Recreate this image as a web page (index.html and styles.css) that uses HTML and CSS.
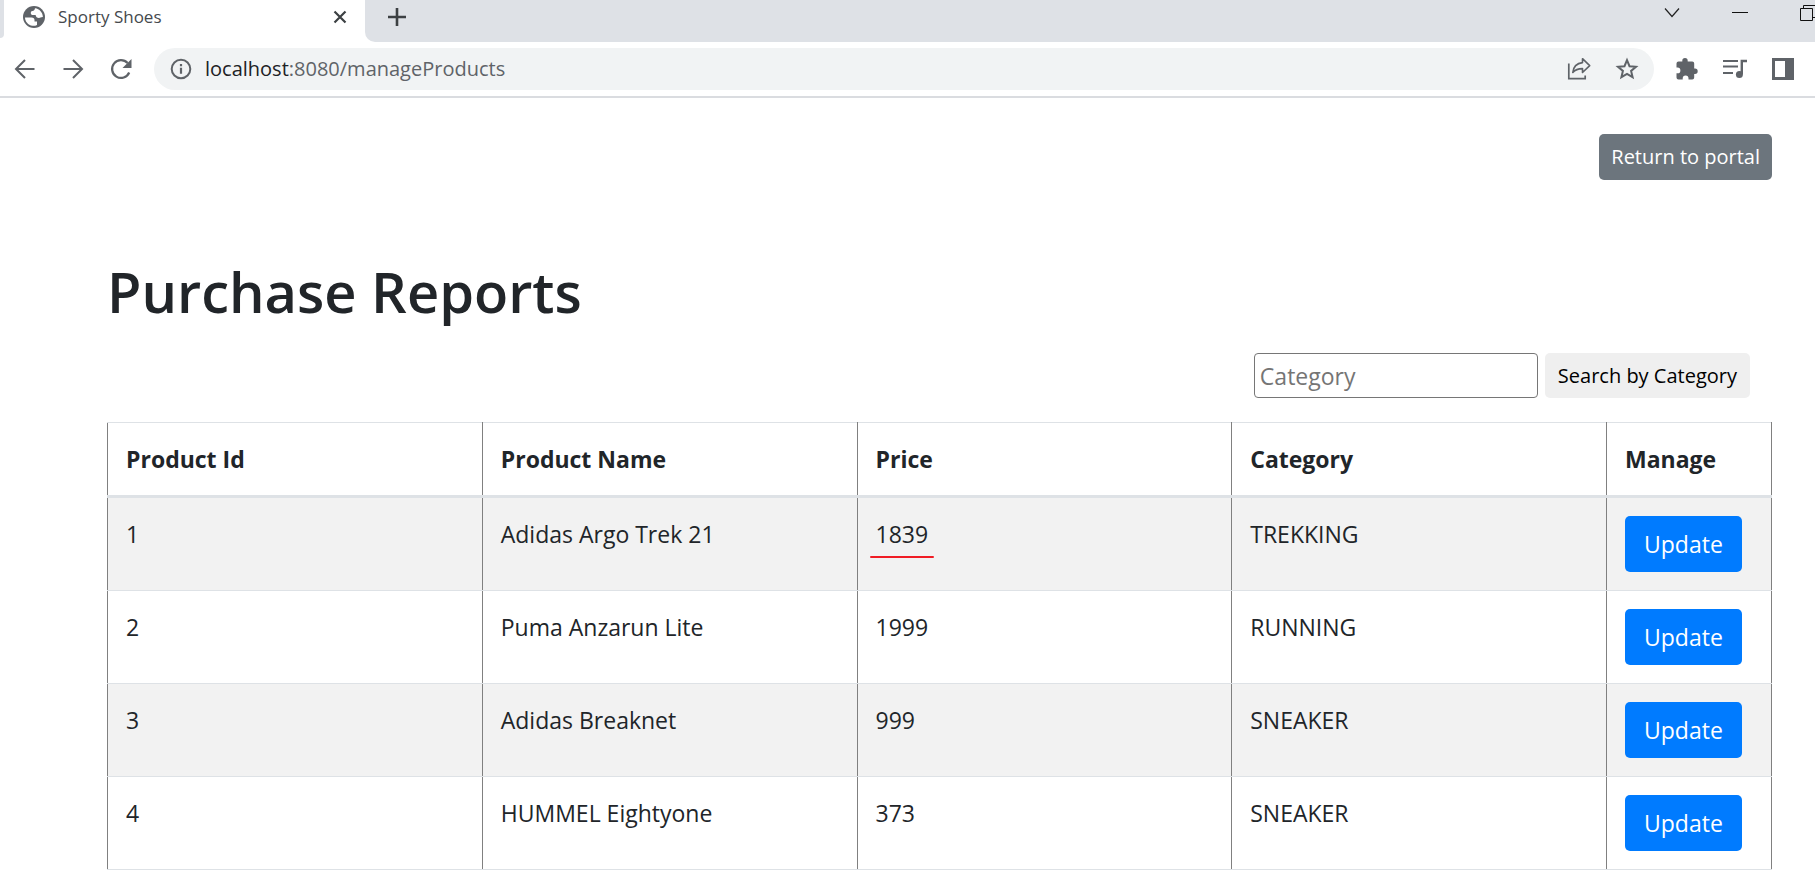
FILE: index.html
```html
<!DOCTYPE html>
<html lang="en">
<head>
<meta charset="utf-8">
<title>Sporty Shoes</title>
<link rel="stylesheet" href="styles.css">
</head>
<body>
<header class="browser">
  <div class="tabstrip">
    <div class="strip-edge"></div>
    <div class="tab">
      <svg class="favicon" viewBox="0 0 24 24" aria-hidden="true"><circle cx="12" cy="12" r="11" fill="#5f6368"/><path d="M3 12.500h6.500c2 0 3 1 3 2.500v1.500h2.500v3.500c-1.500.800-3 1-4.500.800C6 20 3 16.500 3 12.500zM13 3.200c-.4 1.800-1 2.600-2.600 2.800-1 .1-1.600.8-1.600 2 0 1.400.8 2 2.200 2h2.600c.3 2 1.400 3 3.400 3 1.200 0 1.600-1 3.900-1C20.800 7.500 17.500 3.800 13 3.200z" fill="#fff"/></svg>
      <span class="tab-title">Sporty Shoes</span>
      <button class="icon-btn" aria-label="Close tab"><svg width="14" height="14" viewBox="0 0 14 14"><path d="M1.500 1.500l11 11M12.500 1.500l-11 11" stroke="#3c4043" stroke-width="2.200"/></svg></button>
    </div>
    <div class="strip-rest">
      <button class="icon-btn" aria-label="New tab"><svg width="20" height="20" viewBox="0 0 20 20"><path d="M10 1v18M1 10h18" stroke="#3c4043" stroke-width="2.600"/></svg></button>
      <div class="window-controls">
        <button class="window-btn" aria-label="Search tabs"><svg width="18" height="12" viewBox="0 0 18 12"><path d="M2 1.500l7 8 7-8" fill="none" stroke="#222" stroke-width="1.200"/></svg></button>
        <button class="window-btn" aria-label="Minimize"><svg width="16" height="12" viewBox="0 0 16 12"><path d="M0 5.500h16" stroke="#111"/></svg></button>
        <button class="window-btn" aria-label="Restore"><svg width="16" height="16" viewBox="0 0 16 16"><path d="M.5 3.500h12v12H.5zM3.500 3.500v-3h12v12h-3" fill="none" stroke="#111"/></svg></button>
      </div>
    </div>
  </div>
  <div class="toolbar">
    <nav class="nav-icons">
      <button class="icon-btn" aria-label="Back"><svg width="24" height="24" viewBox="0 0 24 24"><path d="M21.500 12H3.500M12 3l-9 9 9 9" fill="none" stroke="#5f6368" stroke-width="2"/></svg></button>
      <button class="icon-btn" aria-label="Forward"><svg width="24" height="24" viewBox="0 0 24 24"><path d="M2.500 12h18M12 3l9 9-9 9" fill="none" stroke="#5f6368" stroke-width="2"/></svg></button>
      <button class="icon-btn" aria-label="Reload"><svg width="24" height="24" viewBox="0 0 24 24"><path d="M20.200 15.500A8.900 8.900 0 1 1 18.600 6" fill="none" stroke="#5f6368" stroke-width="2.200"/><path d="M22.500 2v9h-9z" fill="#5f6368"/></svg></button>
    </nav>
    <div class="omnibox">
      <svg width="24" height="24" viewBox="0 0 24 24" aria-hidden="true"><circle cx="12" cy="12" r="9.300" fill="none" stroke="#5f6368" stroke-width="2"/><path d="M12 10.700v6M12 7v2.300" stroke="#5f6368" stroke-width="2.200"/></svg>
      <span class="url"><span class="host">localhost</span>:8080/manageProducts</span>
      <button class="icon-btn" aria-label="Share"><svg width="24" height="24" viewBox="0 0 24 24"><path d="M1.800 6.500v15.200h16.400v-3.200" fill="none" stroke="#5f6368" stroke-width="1.700"/><path d="M15.500 1.700l7.200 6.900-7.200 6.900v-3.900c-4.500 0-7.300 1-9.700 3.900.5-5 3.500-9.200 9.700-9.900z" fill="none" stroke="#5f6368" stroke-width="1.600" stroke-linejoin="round"/></svg></button>
      <button class="icon-btn" aria-label="Bookmark"><svg width="24" height="24" viewBox="0 0 24 24"><path d="M12 3.200l2.500 6 6.500.5-4.900 4.200 1.500 6.300L12 16.900l-5.600 3.300 1.500-6.300L3 9.700l6.500-.5z" fill="none" stroke="#5f6368" stroke-width="2"/></svg></button>
    </div>
    <div class="nav-icons">
      <button class="icon-btn" aria-label="Extensions"><svg width="24" height="24" viewBox="0 0 24 24"><path d="M20 11.500h-.800V6.500a2 2 0 0 0-2-2h-4.500V3.700a2.700 2.700 0 0 0-5.400 0v.8H3.500a2 2 0 0 0-2 2v4h1a2.900 2.900 0 0 1 0 5.800h-1v4.200a2 2 0 0 0 2 2h4.200v-1a2.900 2.900 0 0 1 5.800 0v1h3.700a2 2 0 0 0 2-2v-3.600h.8a2.700 2.700 0 0 0 0-5.400z" fill="#5f6368"/></svg></button>
      <button class="icon-btn" aria-label="Media controls"><svg width="24" height="24" viewBox="0 0 24 24"><path d="M0 4h15M0 9.500h15M0 16h10" stroke="#5f6368" stroke-width="2.100"/><path d="M18.800 17V4H24" fill="none" stroke="#5f6368" stroke-width="2.400"/><circle cx="16.400" cy="17.400" r="3.500" fill="#5f6368"/></svg></button>
      <button class="icon-btn" aria-label="Side panel"><svg width="24" height="24" viewBox="0 0 24 24"><path d="M1 1h22v22H1zM4 4v16h10V4z" fill="#5f6368" fill-rule="evenodd"/></svg></button>
    </div>
  </div>
</header>

<main class="page">
  <div class="portal-row"><a class="btn btn-secondary" href="#">Return to portal</a></div>
  <h1 class="title">Purchase Reports</h1>
  <form class="search">
    <input class="search-input" type="text" placeholder="Category" aria-label="Category">
    <button class="btn btn-plain" type="button">Search by Category</button>
  </form>
  <table class="products">
    <thead>
      <tr><th>Product Id</th><th>Product Name</th><th>Price</th><th>Category</th><th class="manage">Manage</th></tr>
    </thead>
    <tbody>
      <tr><td>1</td><td>Adidas Argo Trek 21</td><td><span class="marked">1839</span></td><td>TREKKING</td><td><button class="btn btn-primary">Update</button></td></tr>
      <tr><td>2</td><td>Puma Anzarun Lite</td><td>1999</td><td>RUNNING</td><td><button class="btn btn-primary">Update</button></td></tr>
      <tr><td>3</td><td>Adidas Breaknet</td><td>999</td><td>SNEAKER</td><td><button class="btn btn-primary">Update</button></td></tr>
      <tr><td>4</td><td>HUMMEL Eightyone</td><td>373</td><td>SNEAKER</td><td><button class="btn btn-primary">Update</button></td></tr>
    </tbody>
  </table>
</main>
</body>
</html>
```
FILE: styles.css
```css
* { box-sizing: border-box; }

body {
  margin: 0;
  overflow: hidden;
  background: #fff;
  color: #212529;
  font-family: "Open Sans", "Noto Sans", sans-serif;
  font-size: 23px;
  line-height: 36px;
}

button, input { font-family: inherit; }
svg { display: block; flex: none; }

.icon-btn, .window-btn {
  display: flex;
  align-items: center;
  justify-content: center;
  flex: none;
  padding: 0;
  border: 0;
  background: none;
}

/* Browser chrome */
.browser { border-bottom: 2px solid #dadce0; }

.tabstrip {
  display: flex;
  height: 42px;
  overflow: hidden;
}

.strip-edge {
  width: 4px;
  height: 38px;
  background: #dee1e6;
  border-bottom-right-radius: 4px;
}

.tab {
  display: flex;
  align-items: center;
  width: 361px;
  height: 33px;
  padding: 0 18px;
}

.favicon { width: 24px; height: 24px; }

.tab-title {
  flex: 1;
  margin-left: 12px;
  color: #45494d;
  font-size: 17px;
  line-height: 24px;
}

.strip-rest {
  display: flex;
  flex: 1;
  justify-content: space-between;
  align-items: flex-start;
  padding-left: 22px;
  background: #dee1e6;
  border-bottom-left-radius: 10px;
}

.strip-rest > .icon-btn { height: 33px; }
.window-controls { display: flex; margin-right: -27px; }
.window-btn { width: 68px; height: 25px; }

.toolbar {
  display: flex;
  align-items: center;
  gap: 21px;
  height: 54px;
  padding: 0 20px 0 13px;
}

.nav-icons { display: flex; gap: 24px; }

.omnibox {
  display: flex;
  flex: 1;
  align-items: center;
  gap: 24px;
  height: 42px;
  padding: 0 15px;
  border-radius: 21px;
  background: #f1f3f4;
}

.url {
  flex: 1;
  margin-left: -12px;
  color: #5f6368;
  font-size: 20px;
  line-height: 30px;
}

.host { color: #202124; }

/* Page */
.page { padding: 36px 43px 0 107px; }

.btn {
  border: 0;
  border-radius: 5px;
  font-size: 20px;
  line-height: 30px;
  text-align: center;
  text-decoration: none;
}

.portal-row { display: flex; justify-content: flex-end; }

.btn-secondary {
  padding: 8px 12px;
  background: #6c757d;
  color: #fff;
}

.title {
  margin: 75px 0 26px;
  font-size: 56px;
  font-weight: 600;
  line-height: 72px;
}

.search {
  display: flex;
  justify-content: flex-end;
  gap: 7px;
  margin: 0 22px 24px 0;
}

.search-input {
  width: 284px;
  height: 45px;
  padding: 2px 5px;
  border: 1px solid #767676;
  border-radius: 4px;
  background: #fff;
  color: #212529;
  font-size: 23px;
}

.search-input::placeholder { color: #757575; }

.btn-plain {
  height: 45px;
  padding: 0 13px;
  background: #efefef;
  color: #000;
}

.products {
  width: 100%;
  table-layout: fixed;
  border-collapse: collapse;
}

.products th, .products td {
  padding: 18px;
  border: 1px solid #808080;
  border-top-color: #dee2e6;
  border-bottom-color: #dee2e6;
  text-align: left;
  vertical-align: top;
}

.products th {
  border-bottom: 3px solid #dee2e6;
  font-weight: 700;
}

.products .manage { width: 165px; }
.products tbody tr:nth-child(odd) { background: #f2f2f2; }

.btn-primary {
  display: block;
  padding: 10px 19px;
  background: #007bff;
  color: #fff;
  font-size: 23px;
  line-height: 36px;
}

.marked { position: relative; }

.marked::after {
  content: "";
  position: absolute;
  right: -6px;
  bottom: -8px;
  left: -6px;
  height: 2px;
  border-radius: 1px;
  background: #f01c24;
}
```
